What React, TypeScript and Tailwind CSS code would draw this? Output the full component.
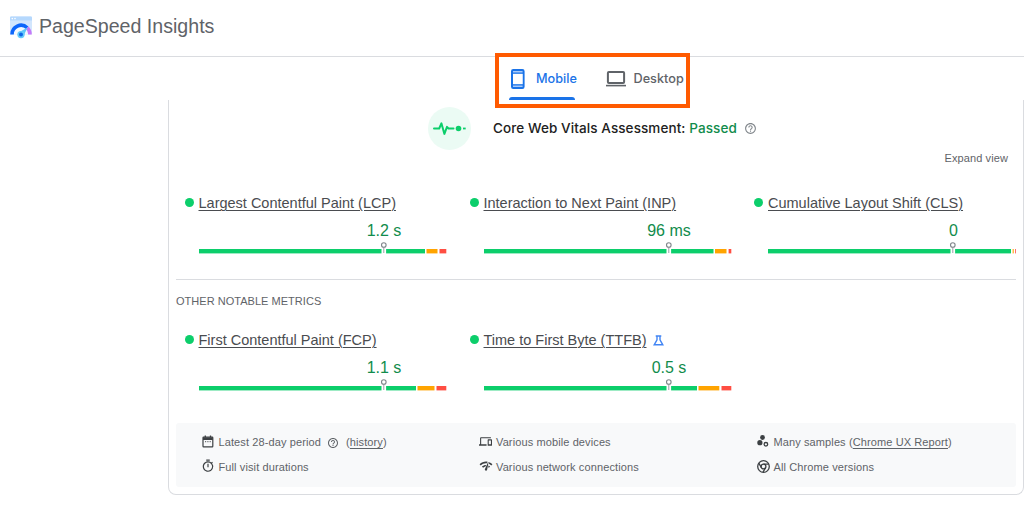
import React from "react";
import { MdHelpOutline, MdOutlineTimer, MdDevices, MdNetworkCheck } from "react-icons/md";

type Segments = [number, number, number, number, number, number];

function Logo() {
  return (
    <svg className="h-[23px] w-[22px] shrink-0" viewBox="0 0 22 23">
      <rect x="0" y="0.5" width="22" height="18" rx="1.2" fill="#d2e6fd" />
      <path d="M1.2.5h19.6A1.2 1.2 0 0 1 22 1.7V4.6H0V1.7A1.2 1.2 0 0 1 1.2.5z" fill="#b5d8fd" />
      <circle cx="2.3" cy="2.6" r="0.8" fill="#fff" />
      <circle cx="5" cy="2.6" r="0.8" fill="#fff" />
      <path d="M3.6 18.5a7.3 7.3 0 0 1 14.8 0z" fill="#f3f9ff" />
      <path d="M2 18.5A9 9 0 0 1 17.2 11.8" fill="none" stroke="#0d66fb" strokeWidth="3.6" />
      <path d="M17.2 11.8A9 9 0 0 1 20 18.5" fill="none" stroke="#c679f7" strokeWidth="3.6" />
      <path d="M17.8 11.3L8.6 16.5l4.5 4z" fill="#5cc5fa" />
      <circle cx="11" cy="18.6" r="3.7" fill="#65cbfb" />
      <circle cx="11" cy="18.5" r="2" fill="#0d66e8" />
    </svg>
  );
}

function PhoneIcon() {
  return (
    <svg className="h-5 w-[14px] shrink-0" viewBox="0 0 14 20">
      <rect x="1" y="1" width="11.6" height="18" rx="1.2" fill="#a9cbfa" stroke="#1a73e8" strokeWidth="2" />
      <rect x="2" y="4.6" width="9.6" height="10.8" fill="#fff" />
      <path d="M1 4.1h11.6M1 15.9h11.6" stroke="#1a73e8" strokeWidth="1.3" />
    </svg>
  );
}

function LaptopIcon() {
  return (
    <svg className="h-4 w-5 shrink-0" viewBox="0 0 20 16">
      <rect x="1.9" y="1.1" width="16.2" height="11" rx="1" fill="none" stroke="#5f6368" strokeWidth="2" />
      <path d="M0 14.6h20" stroke="#5f6368" strokeWidth="1.6" />
    </svg>
  );
}

function PulseIcon() {
  return (
    <svg className="h-[43px] w-[43px] shrink-0" viewBox="0 0 43 43">
      <circle cx="21.5" cy="21.5" r="21.5" fill="#ebfbf4" />
      <path
        d="M6 21.5h5.2l2.2-5.2 3 10.6 2.6-7 1.5 1.6h5"
        fill="none"
        stroke="#0cce6b"
        strokeWidth="2"
        strokeLinejoin="round"
        strokeLinecap="round"
      />
      <circle cx="30.5" cy="21.5" r="2.8" fill="#0cce6b" />
      <path d="M35 21.5h2.7" stroke="#0cce6b" strokeWidth="1.8" />
    </svg>
  );
}

function FlaskIcon() {
  return (
    <svg className="mb-[2px] ml-[6px] h-[11px] w-[11px]" viewBox="0 0 11 11" fill="none" stroke="#4285f4" strokeWidth="1.4">
      <path d="M2.7 1h5.6M4 1v3.8L1.2 9.8h8.6L7 4.8V1" />
    </svg>
  );
}

function CalendarIcon() {
  return (
    <svg className="ml-px h-[13px] w-3" viewBox="0 0 12 13" fill="none" stroke="#3c4043">
      <rect x="1" y="2.2" width="9.8" height="9.6" rx="0.6" strokeWidth="1.2" />
      <path d="M1 3.7h9.8" strokeWidth="2.6" />
      <path d="M3.3.5v2M8.5.5v2" strokeWidth="1.3" />
      <path d="M3 6.7h1.2M5.3 6.7h1.2M7.6 6.7h1.2" strokeWidth="0.9" />
    </svg>
  );
}

function SamplesIcon() {
  return (
    <svg className="ml-px h-3 w-3" viewBox="0 0 12 12">
      <circle cx="5.5" cy="2.5" r="2.4" fill="#3c4043" />
      <circle cx="2.9" cy="7.7" r="2.6" fill="#3c4043" />
      <circle cx="8.9" cy="9.3" r="1.8" fill="none" stroke="#3c4043" strokeWidth="1.3" />
    </svg>
  );
}

function ChromeIcon() {
  return (
    <svg className="ml-px h-[13px] w-[13px]" viewBox="0 0 13 13" fill="none" stroke="#3c4043" strokeWidth="1.3">
      <circle cx="6.5" cy="6.5" r="5.8" />
      <circle cx="6.5" cy="6.5" r="2.4" />
      <path d="M6.5 4.1h5.2M4.4 7.7L1.8 3.2M8.6 7.7L6 12.2" />
    </svg>
  );
}

function Metric({
  name,
  value,
  seg,
  flask,
  faint,
}: {
  name: string;
  value: string;
  seg: Segments;
  flask?: boolean;
  faint?: boolean;
}) {
  return (
    <div className="flex h-[61px] gap-[5px]">
      <span className="mt-[5px] h-[9px] w-[9px] shrink-0 rounded-full bg-[#0cce6b]" />
      <div className="flex w-[248px] flex-col">
        <div className="flex h-[21px] items-center whitespace-nowrap pt-px text-[14.5px] text-[#4a4c50]">
          <span className="underline decoration-1 underline-offset-2">{name}</span>
          {flask && <FlaskIcon />}
        </div>
        <div className="flex h-[27px] items-center justify-center pl-[123px] pt-[7px] text-[16px] text-[#118c4c]">{value}</div>
        <svg className="h-[13px] w-[248px] shrink-0" viewBox="0 0 248 13">
          <rect x={seg[0]} y="8" width={seg[1] - seg[0]} height="4.4" fill="#0cce6b" />
          <rect x={seg[2]} y="8" width={seg[3] - seg[2]} height="4.4" fill="#ffa400" opacity={faint ? 0.7 : 1} />
          <rect x={seg[4]} y="8" width={seg[5] - seg[4]} height="4.4" fill="#ff4e42" opacity={faint ? 0.8 : 1} />
          <rect x="182.5" y="6" width="4.6" height="7" fill="#fff" />
          <path d="M184.8 6v6" stroke="#9aa0a6" strokeWidth="1" />
          <circle cx="184.8" cy="4" r="2.3" fill="#fff" stroke="#80868b" strokeWidth="1.1" />
        </svg>
      </div>
    </div>
  );
}

function Note({ icon, children }: { icon: React.ReactNode; children: React.ReactNode }) {
  return (
    <div className="flex h-[25px] items-center whitespace-nowrap">
      <span className="flex w-[17.5px] shrink-0 items-center pb-[3px] text-[#3c4043]">{icon}</span>
      {children}
    </div>
  );
}

export default function App() {
  return (
    <div className="relative flex h-[512px] w-[1024px] flex-col overflow-hidden bg-white font-['Liberation_Sans',Arial,sans-serif] text-[#5f6368]">
      <header className="flex h-[57px] shrink-0 items-center gap-[7px] border-b border-[#dadce0] pb-[2px] pl-[10px]">
        <Logo />
        <h1 className="pb-[3px] text-[19.6px] leading-6">PageSpeed Insights</h1>
      </header>

      <nav className="flex h-[43px] shrink-0 pl-[509px] font-['Inter','Liberation_Sans',sans-serif] text-[12.7px] font-medium">
        <div className="flex w-[66px] flex-col text-[#1a73e8]">
          <div className="flex h-[40px] items-center gap-[11px] pl-[2px] pt-[3px]">
            <PhoneIcon />
            <span>Mobile</span>
          </div>
          <div className="h-[3px] rounded-t-[3px] bg-[#1a73e8]" />
        </div>
        <div className="ml-[31px] flex h-[40px] items-center gap-[7.5px] pt-[3px]">
          <LaptopIcon />
          <span>Desktop</span>
        </div>
      </nav>

      <main className="ml-[168px] flex h-[395px] w-[856px] shrink-0 flex-col rounded-b-[8px] border-x border-b border-[#dadce0] px-[7px]">
        <div className="flex h-[57px] shrink-0 items-center pl-[252px]">
          <PulseIcon />
          <h2 className="ml-[22px] whitespace-nowrap font-['Inter','Liberation_Sans',sans-serif] text-[13.5px] font-medium tracking-[0.09px] text-[#212121]">
            Core Web Vitals Assessment: <span className="text-[#118c4c]">Passed</span>
          </h2>
          <MdHelpOutline className="ml-[7px] text-[13px] text-[#80868b]" />
        </div>
        <div className="flex h-[36px] shrink-0 justify-end pr-[8px] text-[11px] leading-[2px] tracking-[0.1px]">Expand view</div>

        <section className="grid h-[87px] shrink-0 grid-cols-[285px_284.5px_262px] border-b border-[#dadce0] pl-[8.5px]">
          <Metric name="Largest Contentful Paint (LCP)" value="1.2 s" seg={[0, 226, 227.5, 238.5, 240.5, 247.3]} />
          <Metric name="Interaction to Next Paint (INP)" value="96 ms" seg={[0, 229.5, 231, 242.5, 244.6, 247.3]} />
          <Metric name="Cumulative Layout Shift (CLS)" value="0" seg={[0, 243, 244.5, 246, 247, 248]} faint />
        </section>

        <h3 className="flex h-[50px] shrink-0 items-start pt-[12px] text-[11px] leading-[18px] tracking-[0.03px]">OTHER NOTABLE METRICS</h3>

        <section className="grid h-[93px] shrink-0 grid-cols-[285px_284.5px_262px] pl-[8.5px]">
          <Metric name="First Contentful Paint (FCP)" value="1.1 s" seg={[0, 217, 218.5, 235.5, 237.5, 247.3]} />
          <Metric name="Time to First Byte (TTFB)" value="0.5 s" seg={[0, 213, 214.5, 235.3, 237.5, 247.3]} flask />
        </section>

        <footer className="grid h-[64px] shrink-0 grid-cols-[277.5px_277.5px_1fr] content-start rounded-[3px] bg-[#f8f9fa] pl-[25px] pt-[7px] text-[11px] tracking-[0.11px]">
          <Note icon={<CalendarIcon />}>
            Latest 28-day period
            <MdHelpOutline className="ml-[6px] mr-[7px] text-[12px]" />
            <span>
              (<span className="underline underline-offset-2">history</span>)
            </span>
          </Note>
          <Note icon={<MdDevices className="text-[13px]" />}>Various mobile devices</Note>
          <Note icon={<SamplesIcon />}>
            <span>
              Many samples (<span className="underline underline-offset-2">Chrome UX Report</span>)
            </span>
          </Note>
          <Note icon={<MdOutlineTimer className="text-[14px]" />}>Full visit durations</Note>
          <Note icon={<MdNetworkCheck className="text-[14px]" />}>Various network connections</Note>
          <Note icon={<ChromeIcon />}>All Chrome versions</Note>
        </footer>
      </main>

      <div className="pointer-events-none absolute left-[495px] top-[53px] h-[55px] w-[195px] border-4 border-[#ff5a00]" />
    </div>
  );
}
